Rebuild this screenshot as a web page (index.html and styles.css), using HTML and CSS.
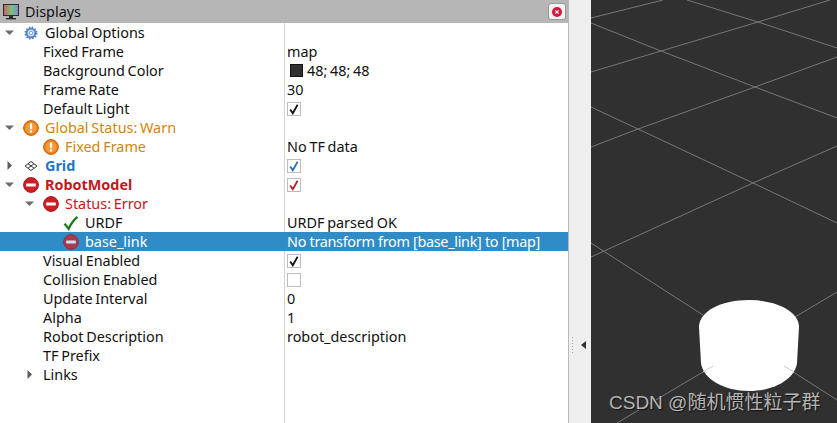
FILE: index.html
```html
<!DOCTYPE html>
<html lang="en">
<head>
<meta charset="utf-8">
<title>Displays</title>
<link rel="stylesheet" href="styles.css">
</head>
<body>
<svg class="defs" width="0" height="0" aria-hidden="true">
  <defs>
    <symbol id="down" viewBox="0 0 9 9"><path d="M0 2.5H9L4.5 7Z" fill="#6b6b6b"/></symbol>
    <symbol id="right" viewBox="0 0 9 9"><path d="M2.5 0V9L7 4.5Z" fill="#5c5c5c"/></symbol>
    <symbol id="warn" viewBox="0 0 16 16"><circle cx="8" cy="8" r="7.4" fill="#ee7d16" stroke="#c9640f"/><circle cx="8" cy="8" r="5.6" fill="#f49a3a"/><rect x="6.9" y="3.2" width="2.2" height="6" rx=".6" fill="#fff"/><rect x="6.9" y="10.3" width="2.2" height="2.2" rx=".6" fill="#fff"/></symbol>
    <symbol id="error" viewBox="0 0 16 16"><circle cx="8" cy="8" r="7.4" fill="#cf1f25" stroke="#a8161b"/><rect x="3.2" y="6.4" width="9.6" height="3.2" rx=".4" fill="#fff"/></symbol>
    <symbol id="check" viewBox="0 0 12 12"><path d="M2.2 6.4 4.8 10.2 9.6 1.8" fill="none" stroke="currentColor" stroke-width="1.8"/></symbol>
  </defs>
</svg>
<div class="app">
  <section class="panel">
    <header class="titlebar">
      <svg class="monitor" viewBox="0 0 16 16" aria-hidden="true">
        <defs><linearGradient id="scr" x1="0" x2="1" y1="0" y2="0"><stop offset="0" stop-color="#d9595f"/><stop offset=".5" stop-color="#72c47a"/><stop offset="1" stop-color="#8a8ad6"/></linearGradient></defs>
        <rect x=".5" y=".5" width="15" height="11" fill="url(#scr)" stroke="#2b2b2b"/>
        <rect x="6" y="12" width="4" height="2" fill="#2b2b2b"/><rect x="3" y="14" width="10" height="1.4" fill="#2b2b2b"/>
      </svg>
      <span class="title">Displays</span>
      <button class="close" aria-label="Close">
        <svg viewBox="0 0 10 10" aria-hidden="true"><circle cx="5" cy="5" r="5" fill="#d8173f"/><path d="M3.3 3.3 6.7 6.7M6.7 3.3 3.3 6.7" stroke="#fff" stroke-width="1.2"/></svg>
      </button>
    </header>
    <div class="tree">
      <div class="row">
        <div class="name d0"><svg class="arrow"><use href="#down"/></svg>
          <svg class="icon gear" viewBox="0 0 16 16" aria-hidden="true"><circle cx="8" cy="8" r="5" fill="#d4e2f5" stroke="#4a7cc4" stroke-width="2"/><circle cx="8" cy="8" r="6.6" fill="none" stroke="#4a7cc4" stroke-width="1.6" stroke-dasharray="1.8 1.66"/><circle cx="8" cy="8" r="2" fill="#fff" stroke="#6d97d2"/></svg>
          <span>Global Options</span></div>
        <div class="value"></div>
      </div>
      <div class="row"><div class="name leaf">Fixed Frame</div><div class="value">map</div></div>
      <div class="row"><div class="name leaf">Background Color</div><div class="value"><i class="swatch"></i>48; 48; 48</div></div>
      <div class="row"><div class="name leaf">Frame Rate</div><div class="value">30</div></div>
      <div class="row"><div class="name leaf">Default Light</div><div class="value"><span class="box"><svg><use href="#check"/></svg></span></div></div>
      <div class="row warn">
        <div class="name d0"><svg class="arrow"><use href="#down"/></svg><svg class="icon"><use href="#warn"/></svg><span>Global Status: Warn</span></div>
        <div class="value"></div>
      </div>
      <div class="row">
        <div class="name d1 warn"><svg class="icon"><use href="#warn"/></svg><span>Fixed Frame</span></div>
        <div class="value">No TF data</div>
      </div>
      <div class="row">
        <div class="name d0 grid-name"><svg class="arrow"><use href="#right"/></svg>
          <svg class="icon gridicon" viewBox="0 0 16 16" aria-hidden="true"><path d="M8 3.5 14 8 8 12.5 2 8ZM5 5.8 11 10.2M11 5.8 5 10.2" fill="none" stroke="#333" stroke-width="1"/></svg>
          <span>Grid</span></div>
        <div class="value"><span class="box blue"><svg><use href="#check"/></svg></span></div>
      </div>
      <div class="row">
        <div class="name d0 robot"><svg class="arrow"><use href="#down"/></svg><svg class="icon"><use href="#error"/></svg><span>RobotModel</span></div>
        <div class="value"><span class="box red"><svg><use href="#check"/></svg></span></div>
      </div>
      <div class="row">
        <div class="name d1 arrowed err"><svg class="arrow"><use href="#down"/></svg><svg class="icon"><use href="#error"/></svg><span>Status: Error</span></div>
        <div class="value"></div>
      </div>
      <div class="row">
        <div class="name d2"><svg class="icon tick" viewBox="0 0 16 16" aria-hidden="true"><path d="M1.5 8.6 5.6 13.8C7.6 9.4 10.6 5 14.5 1.8" fill="none" stroke="#1f7a1f" stroke-width="2.3"/></svg><span>URDF</span></div>
        <div class="value">URDF parsed OK</div>
      </div>
      <div class="row selected">
        <div class="name d2"><svg class="icon dim"><use href="#error"/></svg><span>base_link</span></div>
        <div class="value tight">No transform from [base_link] to [map]</div>
      </div>
      <div class="row"><div class="name leaf">Visual Enabled</div><div class="value"><span class="box"><svg><use href="#check"/></svg></span></div></div>
      <div class="row"><div class="name leaf">Collision Enabled</div><div class="value"><span class="box"></span></div></div>
      <div class="row"><div class="name leaf">Update Interval</div><div class="value">0</div></div>
      <div class="row"><div class="name leaf">Alpha</div><div class="value">1</div></div>
      <div class="row"><div class="name leaf">Robot Description</div><div class="value">robot_description</div></div>
      <div class="row"><div class="name leaf">TF Prefix</div><div class="value"></div></div>
      <div class="row">
        <div class="name d1 links"><svg class="arrow"><use href="#right"/></svg><span>Links</span></div>
        <div class="value"></div>
      </div>
    </div>
  </section>
  <div class="splitter">
    <span class="dots"></span>
    <svg class="collapse" viewBox="0 0 5 8" aria-hidden="true"><path d="M5 0V8L0 4Z" fill="#333"/></svg>
  </div>
  <main class="view">
    <svg class="scene" viewBox="591 0 246 423" aria-hidden="true">
      <g class="gridlines">
        <path d="M591 18 663 0"/>
        <path d="M591 23 661 51 755 87 837 118"/>
        <path d="M591 72 661 51 758 22 830 0"/>
        <path d="M687 0 758 22 837 48"/>
        <path d="M591 107 638 129 753 183 837 223"/>
        <path d="M591 147 638 129 755 87 837 57"/>
        <path d="M837 146 753 183 591 257"/>
        <path d="M591 243 703 315"/>
        <path d="M837 292 795 317"/>
        <path d="M617 423 713 366"/>
        <path d="M784 366 837 400"/>
      </g>
      <path class="cyl" d="M699 327C699 311 722 300 749 300S799 311 799 327L797 363C795 379 774 391 749 391S703 379 701 363Z"/>
      <path class="faint" d="M703 372 713 366M784 366 794 372"/>
    </svg>
    <div class="watermark">CSDN @随机惯性粒子群</div>
  </main>
</div>
</body>
</html>
```
FILE: styles.css
```css
* { box-sizing: border-box; }
html, body { margin: 0; height: 100%; }
body {
  width: 837px;
  height: 423px;
  overflow: hidden;
  font-family: "Noto Sans", "Open Sans", sans-serif;
  font-size: 14.4px;
  word-spacing: -1px;
  color: #111;
  background: #efefef;
}
.defs { display: block; height: 0; }
.app { display: flex; height: 423px; }

.panel {
  width: 569px;
  flex: none;
  display: flex;
  flex-direction: column;
  background: #fff;
  border-right: 1px solid #b9b9b9;
}
.titlebar {
  height: 23px;
  flex: none;
  display: flex;
  align-items: center;
  padding: 0 2px 0 3px;
  background: #b6b6b6;
}
.monitor { width: 16px; height: 16px; flex: none; }
.title { margin-left: 6px; flex: 1; }
.close {
  width: 18px;
  height: 17px;
  margin: 0;
  padding: 0;
  display: flex;
  align-items: center;
  justify-content: center;
  border: 1px solid #9a9a9a;
  border-radius: 3px;
  background: #f2f2f2;
}
.close svg { width: 10px; height: 10px; }

.tree {
  flex: 1;
  background: linear-gradient(#d4d4d4, #d4d4d4) 284px 0 / 1px 100% no-repeat;
}
.row { display: flex; height: 19px; line-height: 19px; white-space: nowrap; }
.name { width: 284px; flex: none; display: flex; align-items: center; }
.value { flex: 1; display: flex; align-items: center; padding-left: 3px; }
.tight { letter-spacing: -.3px; word-spacing: 0; }

.leaf { padding-left: 43px; }
.d0 { padding-left: 5px; }
.d1 { padding-left: 43px; }
.d1.arrowed { padding-left: 25px; }
.d1.links { padding-left: 25px; }
.d2 { padding-left: 63px; }

.arrow { width: 9px; height: 9px; flex: none; }
.d0 .arrow { margin-right: 9px; }
.arrowed .arrow { margin-right: 9px; }
.links .arrow { margin-right: 9px; }
.icon { width: 16px; height: 16px; flex: none; margin-right: 6px; }
.gear { width: 14px; height: 14px; margin: 0 7px 0 1px; }
.dim { opacity: .75; }

.warn { color: #d0860e; }
.warn .value { color: #111; }
.grid-name { color: #1f74c8; font-weight: 700; }
.robot { color: #c4161c; font-weight: 700; }
.err { color: #c4161c; }

.selected { background: #308cc6; color: #fff; }

.swatch {
  width: 13px;
  height: 13px;
  margin: 0 4px 0 3px;
  background: #303030;
  border: 1px solid #111;
}
.box {
  width: 14px;
  height: 14px;
  display: block;
  border: 1px solid #bdbdbd;
  background: #fff;
  color: #111;
}
.box svg { display: block; width: 12px; height: 12px; }
.box.blue { color: #2a6fb5; }
.box.red { color: #b5202a; }

.splitter {
  width: 22px;
  flex: none;
  display: flex;
  align-items: center;
  padding: 266px 0 0 3px;
  background: #efefef;
}
.dots {
  width: 1px;
  height: 16px;
  background: repeating-linear-gradient(#a5a5a5 0 1px, transparent 1px 3px);
}
.collapse { width: 5px; height: 8px; margin-left: 8px; }

.view { position: relative; flex: 1; background: #303030; overflow: hidden; }
.scene { display: block; width: 246px; height: 423px; }
.gridlines path { fill: none; stroke: #777; stroke-width: 1; }
.cyl { fill: #fff; }
.faint { fill: none; stroke: #ccc; stroke-width: 1; }
.watermark {
  position: absolute;
  left: 18px;
  top: 391px;
  font-family: "Liberation Sans", "Noto Sans CJK SC", sans-serif;
  font-size: 19px;
  word-spacing: 0;
  line-height: 24px;
  white-space: nowrap;
  color: #b4b4b4;
  text-shadow: 1px 1px 1px #111;
}
```
